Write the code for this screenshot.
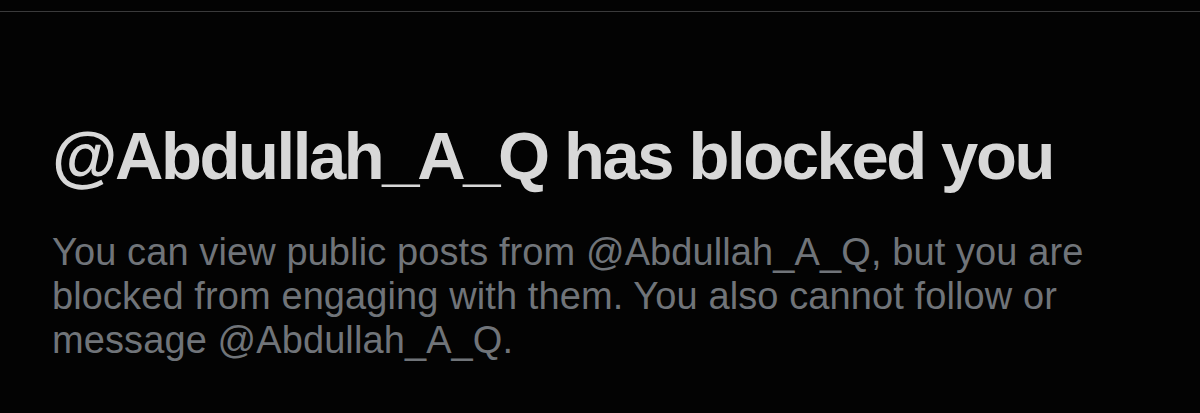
export default function App() {
  return (
    <div className="w-[1200px] h-[413px] bg-[#030303] overflow-hidden" style={{ fontFamily: '"Liberation Sans", Arial, sans-serif' }}>
      <div className="h-[11px]" />
      <div className="h-px bg-[#3a3a3b]" />
      <div className="px-[52px] pt-[104px]">
        <h1 className="text-[67px] leading-[80px] font-bold tracking-[-2.4px] text-[#d8d8d8] whitespace-nowrap">
          @Abdullah_A_Q has blocked you
        </h1>
        <p className="mt-[34px] text-[38px] leading-[44px] tracking-[0.1px] text-[#707479]">
          You can view public posts from @Abdullah_A_Q, but you are blocked from engaging with them. You also cannot follow or message @Abdullah_A_Q.
        </p>
      </div>
    </div>
  );
}
